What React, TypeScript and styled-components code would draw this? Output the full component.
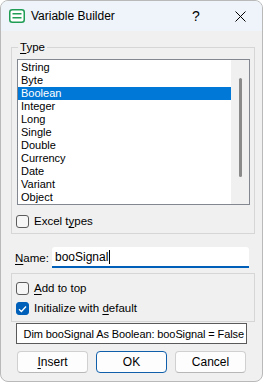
import React from 'react';
import styled, { createGlobalStyle } from 'styled-components';

const GlobalStyle = createGlobalStyle`
  html, body {
    margin: 0;
    padding: 0;
    background: #ffffff;
  }
  body {
    width: 263px;
    height: 382px;
    overflow: hidden;
  }
`;

const uiFont = `'Liberation Sans', Arial, sans-serif`;

const Window = styled.div`
  width: 263px;
  height: 382px;
  box-sizing: border-box;
  border: 1px solid #b9b9b9;
  border-radius: 8px;
  overflow: hidden;
  background: #f0f0f0;
  display: flex;
  flex-direction: column;
  font-family: ${uiFont};
  font-size: 11.5px;
  color: #000;
`;

const TitleBar = styled.div`
  height: 30px;
  flex: none;
  background: #eef4f9;
  display: flex;
  align-items: center;
  padding-left: 8px;
`;

const AppIcon = styled.svg`
  width: 16px;
  height: 14px;
  flex: none;
`;

const Title = styled.span`
  margin-left: 6px;
  font-size: 12px;
  line-height: 16px;
`;

const TitleButtons = styled.div`
  margin-left: auto;
  display: flex;
  align-items: center;
  gap: 24px;
  padding-right: 12px;
`;

const TitleButton = styled.div`
  width: 20px;
  height: 20px;
  display: flex;
  align-items: center;
  justify-content: center;
  font-size: 14px;
`;

const Body = styled.div`
  flex: 1;
  display: flex;
  flex-direction: column;
  padding: 16px 0 0 10px;
`;

const Group = styled.div<{ $h: number; $pt: number; $gap: number }>`
  position: relative;
  width: 244px;
  height: ${(p) => p.$h}px;
  box-sizing: border-box;
  border: 1px solid #d6d6d6;
  padding: ${(p) => p.$pt}px 0 0 4px;
  display: flex;
  flex-direction: column;
  gap: ${(p) => p.$gap}px;
`;

const Legend = styled.span`
  position: absolute;
  top: -8px;
  left: 6px;
  padding: 0 2px;
  background: #f0f0f0;
  line-height: 14px;
`;

const Key = styled.u`
  text-decoration-thickness: 1px;
  text-underline-offset: 2px;
`;

const ListBox = styled.div`
  width: 233px;
  height: 146px;
  margin-left: 1px;
  box-sizing: border-box;
  border: 1px solid #828790;
  background: #fff;
  display: flex;
  font-size: 11px;
`;

const Items = styled.div`
  flex: 1;
  padding-top: 1px;
  display: flex;
  flex-direction: column;
`;

const Item = styled.div<{ $selected?: boolean }>`
  height: 13px;
  line-height: 13px;
  padding-left: 3px;
  background: ${(p) => (p.$selected ? '#0078d7' : 'transparent')};
  color: ${(p) => (p.$selected ? '#fff' : '#000')};
  white-space: nowrap;
`;

const ScrollTrack = styled.div`
  width: 18px;
  flex: none;
  background: #f0f0f0;
  display: flex;
  justify-content: center;
  padding-top: 18px;
  box-sizing: border-box;
`;

const ScrollThumb = styled.div`
  width: 3px;
  height: 99px;
  border-radius: 2px;
  background: #8a8a8a;
`;

const CheckRow = styled.label`
  display: flex;
  align-items: center;
  gap: 5px;
  height: 13px;
  line-height: 13px;
  white-space: nowrap;
`;

const Box = styled.span<{ $checked?: boolean }>`
  width: 13px;
  height: 13px;
  box-sizing: border-box;
  flex: none;
  border-radius: 3px;
  border: 1px solid ${(p) => (p.$checked ? '#005fb8' : '#5c5c5c')};
  background: ${(p) => (p.$checked ? '#005fb8' : '#f6f6f6')};
  display: flex;
  align-items: center;
  justify-content: center;
`;

const NameRow = styled.div`
  display: flex;
  align-items: center;
  margin-top: 13px;
  height: 21px;
`;

const NameLabel = styled.span`
  width: 41px;
  box-sizing: border-box;
  padding-left: 4px;
  flex: none;
`;

const NameInput = styled.div`
  width: 197px;
  height: 21px;
  box-sizing: border-box;
  background: #fff;
  border-bottom: 2px solid #005fb8;
  border-radius: 3px 3px 0 0;
  display: flex;
  align-items: center;
  padding: 1px 0 0 3px;
  font-size: 12px;
`;

const Caret = styled.span`
  width: 1px;
  height: 14px;
  background: #000;
  margin-left: 1px;
`;

const Spacer = styled.div<{ $h: number }>`
  height: ${(p) => p.$h}px;
  flex: none;
`;

const Output = styled.div`
  width: 231px;
  height: 21px;
  margin: 1px 0 0 5px;
  box-sizing: border-box;
  border: 1px solid #5a5a5a;
  background: #fff;
  display: flex;
  align-items: center;
  justify-content: flex-end;
  padding: 0 2px 0 4px;
  white-space: nowrap;
  overflow: hidden;
  font-size: 11px;
  letter-spacing: -0.1px;
`;

const ButtonRow = styled.div`
  display: flex;
  gap: 8px;
  margin: 7px 0 0 6px;
`;

const Button = styled.div<{ $default?: boolean }>`
  width: 71px;
  height: 22px;
  box-sizing: border-box;
  border-radius: 4px;
  background: #fdfdfd;
  border: 1px solid ${(p) => (p.$default ? '#0f5fab' : '#d0d0d0')};
  border-bottom-color: ${(p) => (p.$default ? '#0f5fab' : '#b7b7b7')};
  display: flex;
  align-items: center;
  justify-content: center;
  font-size: 12px;
`;

const types = ['String', 'Byte', 'Boolean', 'Integer', 'Long', 'Single', 'Double', 'Currency', 'Date', 'Variant', 'Object'];

const Check = ({ checked }: { checked?: boolean }) => (
  <Box $checked={checked}>
    {checked && (
      <svg width="9" height="8" viewBox="0 0 9 8">
        <path d="M1 4.2 L3.4 6.5 L8 1.5" fill="none" stroke="#fff" strokeWidth="1.3" />
      </svg>
    )}
  </Box>
);

export default function App() {
  return (
    <>
      <GlobalStyle />
      <Window>
        <TitleBar>
          <AppIcon viewBox="0 0 16 14">
            <rect x="0.75" y="0.75" width="14.5" height="12.5" rx="2.5" fill="#fff" stroke="#1f9d55" strokeWidth="1.5" />
            <rect x="3.5" y="4" width="9" height="1.5" fill="#1f9d55" />
            <rect x="3.5" y="8" width="9" height="1.5" fill="#1f9d55" />
          </AppIcon>
          <Title>Variable Builder</Title>
          <TitleButtons>
            <TitleButton>?</TitleButton>
            <TitleButton>
              <svg width="11" height="11" viewBox="0 0 11 11">
                <path d="M0.5 0.5 L10.5 10.5 M10.5 0.5 L0.5 10.5" stroke="#000" strokeWidth="1" />
              </svg>
            </TitleButton>
          </TitleButtons>
        </TitleBar>
        <Body>
          <Group $h={187} $pt={11} $gap={10}>
            <Legend>
              <Key>T</Key>ype
            </Legend>
            <ListBox>
              <Items>
                {types.map((t) => (
                  <Item key={t} $selected={t === 'Boolean'}>
                    {t}
                  </Item>
                ))}
              </Items>
              <ScrollTrack>
                <ScrollThumb />
              </ScrollTrack>
            </ListBox>
            <CheckRow>
              <Check />
              <span>
                Excel t<Key>y</Key>pes
              </span>
            </CheckRow>
          </Group>
          <NameRow>
            <NameLabel>
              <Key>N</Key>ame:
            </NameLabel>
            <NameInput>
              booSignal
              <Caret />
            </NameInput>
          </NameRow>
          <Spacer $h={5} />
          <Group $h={49} $pt={8} $gap={7}>
            <CheckRow>
              <Check />
              <span>
                <Key>A</Key>dd to top
              </span>
            </CheckRow>
            <CheckRow>
              <Check checked />
              <span>
                Initialize with <Key>d</Key>efault
              </span>
            </CheckRow>
          </Group>
          <Output>Dim booSignal As Boolean: booSignal = False</Output>
          <ButtonRow>
            <Button>
              <span>
                <Key>I</Key>nsert
              </span>
            </Button>
            <Button $default>OK</Button>
            <Button>Cancel</Button>
          </ButtonRow>
        </Body>
      </Window>
    </>
  );
}
